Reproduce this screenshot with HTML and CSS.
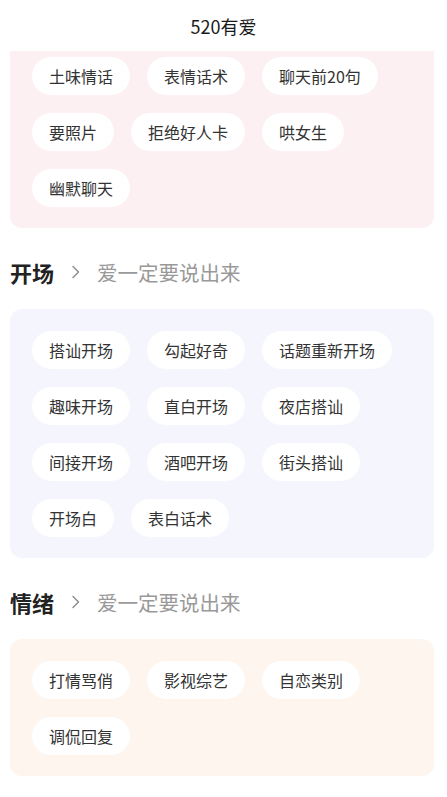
FILE: index.html
```html
<!DOCTYPE html>
<html lang="zh-CN">
<head>
<meta charset="utf-8">
<link rel="stylesheet" href="styles.css">
</head>
<body>
<header class="topbar">520有爱</header>
<main class="content">
  <div class="card card-pink card-cut">
    <span class="chip">土味情话</span>
    <span class="chip">表情话术</span>
    <span class="chip">聊天前20句</span>
    <span class="chip">要照片</span>
    <span class="chip">拒绝好人卡</span>
    <span class="chip">哄女生</span>
    <span class="chip">幽默聊天</span>
  </div>

  <div class="section-head">
    <span class="section-title">开场</span>
    <svg class="chev" width="10" height="14" viewBox="0 0 10 14"><path d="M2 1.5 L7.5 7 L2 12.5" fill="none" stroke="#8a8a8a" stroke-width="1.4" stroke-linecap="round" stroke-linejoin="round"/></svg>
    <span class="section-sub">爱一定要说出来</span>
  </div>
  <div class="card card-blue">
    <span class="chip">搭讪开场</span>
    <span class="chip">勾起好奇</span>
    <span class="chip">话题重新开场</span>
    <span class="chip">趣味开场</span>
    <span class="chip">直白开场</span>
    <span class="chip">夜店搭讪</span>
    <span class="chip">间接开场</span>
    <span class="chip">酒吧开场</span>
    <span class="chip">街头搭讪</span>
    <span class="chip">开场白</span>
    <span class="chip">表白话术</span>
  </div>

  <div class="section-head">
    <span class="section-title">情绪</span>
    <svg class="chev" width="10" height="14" viewBox="0 0 10 14"><path d="M2 1.5 L7.5 7 L2 12.5" fill="none" stroke="#8a8a8a" stroke-width="1.4" stroke-linecap="round" stroke-linejoin="round"/></svg>
    <span class="section-sub">爱一定要说出来</span>
  </div>
  <div class="card card-peach">
    <span class="chip">打情骂俏</span>
    <span class="chip">影视综艺</span>
    <span class="chip">自恋类别</span>
    <span class="chip">调侃回复</span>
  </div>
</main>
</body>
</html>
```

FILE: styles.css
```css
* { box-sizing: border-box; }
html, body {
  margin: 0;
  padding: 0;
  background: #ffffff;
  font-family: "Noto Sans CJK SC", "Noto Sans", sans-serif;
  width: 447px;
  height: 797px;
  overflow: hidden;
}
.topbar {
  height: 51px;
  display: flex;
  align-items: center;
  justify-content: center;
  font-size: 18px;
  color: #1a1a1a;
  background: #ffffff;
}
.content {
  padding: 0 13px 0 10px;
}
.card {
  display: flex;
  flex-wrap: wrap;
  align-content: flex-start;
  gap: 18px 17px;
  padding: 22px 22px 21px 22px;
  border-radius: 12px;
}
.card-cut {
  padding-top: 6px;
  border-top-left-radius: 0;
  border-top-right-radius: 0;
}
.card-pink { background: #fdf0f3; }
.card-blue { background: #f5f6fd; }
.card-peach { background: #fdf5ee; }
.chip {
  display: inline-flex;
  align-items: center;
  height: 38px;
  padding: 0 17px;
  border-radius: 19px;
  background: #ffffff;
  font-size: 16px;
  color: #333333;
  white-space: nowrap;
}
.section-head {
  display: flex;
  align-items: center;
  height: 30px;
  margin: 29px 0 22px 0;
}
.section-title {
  font-size: 22px;
  font-weight: 700;
  color: #222222;
}
.chev {
  margin-left: 17px;
  margin-right: 16px;
}
.section-sub {
  font-size: 20.5px;
  color: #999999;
}
```
